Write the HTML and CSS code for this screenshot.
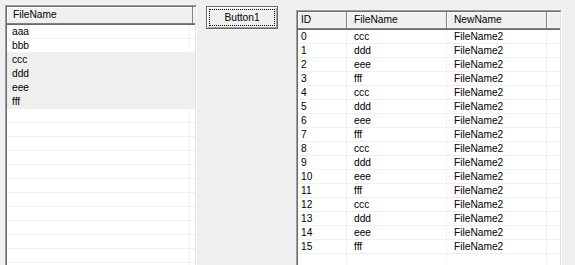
FILE: index.html
```html
<!DOCTYPE html>
<html lang="en">
<head>
  <meta charset="UTF-8">
  <title>Form1</title>
  <link rel="stylesheet" href="styles.css">
</head>
<body>

  <div class="form">
    <!-- Left list: file names -->
    <div class="grid left-grid">
      <div class="grid-inner">
        <div class="head">
          <div class="hcell col-name">FileName</div>
          <div class="hcell fill"></div>
        </div>
        <div class="rows" id="leftBody"></div>
      </div>
    </div>

    <button class="btn" type="button"><span class="focus">Button1</span></button>

    <!-- Right list: renamed files -->
    <div class="grid right-grid">
      <div class="grid-inner">
        <div class="head">
          <div class="hcell col-id">ID</div>
          <div class="hcell col-file">FileName</div>
          <div class="hcell col-new">NewName</div>
          <div class="hcell fill"></div>
        </div>
        <div class="rows" id="rightBody"></div>
      </div>
    </div>
  </div>

  <script>
    const files = ['aaa', 'bbb', 'ccc', 'ddd', 'eee', 'fff'];
    const cycle = ['ccc', 'ddd', 'eee', 'fff'];

    const leftBody = document.getElementById('leftBody');
    for (let i = 0; i < 18; i++) {
      const row = document.createElement('div');
      row.className = 'row';
      if (i >= 2 && i < files.length) row.className += ' shaded';
      row.innerHTML = `<div class="cell col-name">${files[i] || ''}</div><div class="cell fill"></div>`;
      leftBody.appendChild(row);
    }

    const rightBody = document.getElementById('rightBody');
    for (let i = 0; i < 18; i++) {
      const row = document.createElement('div');
      row.className = 'row';
      if (i < 16) {
        row.innerHTML = `
          <div class="cell col-id">${i}</div>
          <div class="cell col-file">${cycle[i % 4]}</div>
          <div class="cell col-new">FileName2</div>
          <div class="cell fill"></div>`;
      } else {
        row.innerHTML = `<div class="cell col-id"></div><div class="cell col-file"></div><div class="cell col-new"></div><div class="cell fill"></div>`;
      }
      rightBody.appendChild(row);
    }
  </script>

</body>
</html>
```

FILE: styles.css
```css
html, body {
  margin: 0;
  padding: 0;
}
body {
  width: 575px;
  height: 265px;
  overflow: hidden;
  background-color: #f0f0f0;
  font-family: "Liberation Sans", Arial, sans-serif;
  font-size: 10.2px;
  color: #000;
}
.form {
  display: flex;
  align-items: flex-start;
  padding-left: 5px;
}

/* sunken list frame */
.grid {
  box-sizing: border-box;
  border: 1px solid;
  border-color: #a0a0a0 #fff #fff #a0a0a0;
  background-color: #fff;
  overflow: hidden;
}
.grid-inner {
  height: 100%;
  box-sizing: border-box;
  border: 1px solid;
  border-color: #696969 #e3e3e3 #e3e3e3 #696969;
  overflow: hidden;
}
.left-grid {
  width: 192px;
  height: 270px;
  margin-top: 5px;
}
.right-grid {
  width: 266px;
  height: 265px;
  margin-top: 10px;
  margin-left: 18px;
}

/* header */
.head {
  display: flex;
  border-bottom: 1px solid #696969;
}
.hcell {
  box-sizing: border-box;
  height: 17px;
  line-height: 16px;
  padding-left: 6px;
  background-color: #f0f0f0;
  border-right: 1px solid #808080;
  border-bottom: 1px solid #808080;
  box-shadow: inset 1px 1px 0 #fff;
  white-space: nowrap;
}
.hcell.fill {
  flex: 1;
  border-right: none;
  padding: 0;
}

/* rows */
.row {
  display: flex;
  height: 14px;
  box-sizing: border-box;
  border-bottom: 1px solid #f0f0f0;
}
.row.shaded {
  background-color: #efefef;
}
.cell {
  box-sizing: border-box;
  line-height: 13px;
  padding-left: 5px;
  border-right: 1px solid #f0f0f0;
  white-space: nowrap;
}
.cell.fill {
  flex: 1;
  border-right: none;
}

/* column widths */
.left-grid .col-name {
  width: 186px;
}
.left-grid .cell.col-name {
  border-right: 1px solid #f4f4f4;
}
.col-id {
  width: 49px;
}
.col-file,
.col-new {
  width: 100px;
}
.right-grid .hcell,
.right-grid .cell {
  padding-left: 7px;
}
.right-grid .col-id {
  padding-left: 3px;
}
.right-grid .fill {
  padding-left: 0;
}

/* push button */
.btn {
  box-sizing: border-box;
  width: 72px;
  height: 23px;
  margin-top: 6px;
  margin-left: 9px;
  padding: 2px;
  background-color: #f0f0f0;
  border: 1px solid #696969;
  box-shadow: inset 1px 1px 0 #fff, inset -1px -1px 0 #a0a0a0;
  font-family: inherit;
  font-size: 10.2px;
  color: #000;
}
.btn .focus {
  display: block;
  height: 100%;
  box-sizing: border-box;
  border: 1px dotted #000;
  line-height: 15px;
  text-align: center;
}
```
